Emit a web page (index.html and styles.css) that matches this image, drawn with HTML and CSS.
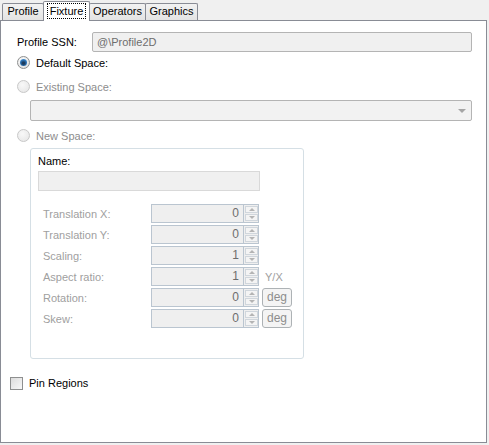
FILE: index.html
```html
<!DOCTYPE html>
<html lang="en">
<head>
    <meta charset="UTF-8">
    <title>Fixture</title>
    <link rel="stylesheet" href="styles.css">
</head>
<body>
    <div class="tabs">
        <div class="tab tab-profile">Profile</div>
        <div class="tab tab-fixture active"><span class="focus">Fixture</span></div>
        <div class="tab tab-operators">Operators</div>
        <div class="tab tab-graphics">Graphics</div>
    </div>

    <div class="panel">
        <div class="ssn-row">
            <span class="ssn-label">Profile SSN:</span>
            <div class="field">@\Profile2D</div>
        </div>

        <div class="option">
            <span class="radio checked"></span>
            <span>Default Space:</span>
        </div>
        <div class="option existing disabled">
            <span class="radio"></span>
            <span>Existing Space:</span>
        </div>
        <div class="combo"><span class="combo-arrow"></span></div>
        <div class="option new-space disabled">
            <span class="radio"></span>
            <span>New Space:</span>
        </div>

        <div class="group">
            <div class="name-label">Name:</div>
            <div class="name-field"></div>

            <div class="params">
                <div class="param">
                    <span class="param-label">Translation X:</span>
                    <div class="num">0</div>
                    <div class="spin"><span class="up"></span><span class="down"></span></div>
                </div>
                <div class="param">
                    <span class="param-label">Translation Y:</span>
                    <div class="num">0</div>
                    <div class="spin"><span class="up"></span><span class="down"></span></div>
                </div>
                <div class="param">
                    <span class="param-label">Scaling:</span>
                    <div class="num">1</div>
                    <div class="spin"><span class="up"></span><span class="down"></span></div>
                </div>
                <div class="param">
                    <span class="param-label">Aspect ratio:</span>
                    <div class="num">1</div>
                    <div class="spin"><span class="up"></span><span class="down"></span></div>
                    <span class="unit">Y/X</span>
                </div>
                <div class="param">
                    <span class="param-label">Rotation:</span>
                    <div class="num">0</div>
                    <div class="spin"><span class="up"></span><span class="down"></span></div>
                    <div class="unit-btn">deg</div>
                </div>
                <div class="param">
                    <span class="param-label">Skew:</span>
                    <div class="num">0</div>
                    <div class="spin"><span class="up"></span><span class="down"></span></div>
                    <div class="unit-btn">deg</div>
                </div>
            </div>
        </div>

        <div class="check-row">
            <span class="checkbox"></span>
            <span>Pin Regions</span>
        </div>
    </div>
</body>
</html>
```

FILE: styles.css
```css
* {
    box-sizing: border-box;
}
body {
    margin: 0;
    background: #f0f0f0;
    font-family: "Liberation Sans", Arial, sans-serif;
    font-size: 11px;
    color: #000;
    width: 489px;
    height: 445px;
    overflow: hidden;
}

/* tab strip */
.tabs {
    display: flex;
    align-items: flex-end;
    height: 20px;
    padding-left: 2px;
}
.tab {
    height: 17px;
    line-height: 15px;
    text-align: center;
    border: 1px solid #898c95;
    border-bottom: none;
    border-radius: 2px 2px 0 0;
    background: linear-gradient(#f2f2f2, #e3e3e3);
}
.tab-profile {
    width: 42px;
}
.tab-fixture {
    width: 47px;
    margin-left: -1px;
}
.tab-operators {
    width: 57px;
    margin-left: -1px;
}
.tab-graphics {
    width: 53px;
    margin-left: -1px;
}
.tab.active {
    position: relative;
    z-index: 1;
    height: 20px;
    margin-bottom: -1px;
    padding-top: 2px;
    background: #fff;
}
.focus {
    display: inline-block;
    height: 16px;
    line-height: 14px;
    padding: 0 2px;
    border: 1px dotted #000;
    margin-top: -1px;
}

/* page */
.panel {
    width: 487px;
    height: 423px;
    background: #fff;
    border: 1px solid #898c95;
    padding: 11px 14px 0 8px;
}
.ssn-row {
    display: flex;
    align-items: center;
    height: 20px;
    margin-left: 8px;
}
.ssn-label {
    width: 75px;
}
.field {
    flex: 1;
    height: 20px;
    line-height: 18px;
    padding-left: 4px;
    color: #6d6d6d;
    background: #f0f0f0;
    border: 1px solid #b4b4b4;
    border-radius: 2px;
}

.option {
    display: flex;
    align-items: center;
    gap: 6px;
    height: 17px;
    margin: 2px 0 0 8px;
}
.option.existing {
    margin-top: 7px;
}
.option.new-space {
    margin-top: 6px;
}
.option.disabled {
    color: #8d8d8d;
}
.radio {
    width: 13px;
    height: 13px;
    border-radius: 50%;
    border: 1px solid #8e8f8f;
    background: radial-gradient(circle at 40% 35%, #ffffff, #d8d8d8);
    display: flex;
    align-items: center;
    justify-content: center;
}
.disabled .radio {
    border-color: #c8c8c8;
    background: radial-gradient(circle at 40% 35%, #f8f8f8, #e4e4e4);
}
.radio.checked::after {
    content: "";
    width: 7px;
    height: 7px;
    border-radius: 50%;
    background: radial-gradient(circle at 50% 60%, #1e3b5c 20%, #2a73b8 55%, #6ab5ec);
}

.combo {
    position: relative;
    height: 21px;
    margin: 5px 0 0 21px;
    background: #f2f2f2;
    border: 1px solid #b4b4b4;
    border-radius: 2px;
}
.combo-arrow {
    position: absolute;
    right: 5px;
    top: 8px;
    border-left: 4px solid transparent;
    border-right: 4px solid transparent;
    border-top: 4px solid #a5a5a5;
}

/* new space group */
.group {
    width: 274px;
    height: 211px;
    margin: 4px 0 0 21px;
    border: 1px solid #d5dfe5;
    border-radius: 3px;
    padding: 6px 0 0 7px;
}
.name-label {
    line-height: 13px;
}
.name-field {
    width: 222px;
    height: 20px;
    margin-top: 3px;
    background: #f0f0f0;
    border: 1px solid #d9d9d9;
}
.params {
    display: flex;
    flex-direction: column;
    gap: 2px;
    margin-top: 13px;
    padding-left: 5px;
}
.param {
    display: flex;
    align-items: center;
    height: 19px;
}
.param-label {
    width: 108px;
    color: #a0a0a0;
}
.num {
    width: 93px;
    height: 19px;
    line-height: 17px;
    text-align: right;
    padding-right: 4px;
    font-size: 12px;
    color: #6d6d6d;
    background: #efefef;
    border: 1px solid #bac5d0;
}
.spin {
    width: 15px;
    height: 19px;
    display: flex;
    flex-direction: column;
    gap: 1px;
    padding: 1px 0 1px 1px;
    background: #efefef;
    border: 1px solid #bac5d0;
    border-left: none;
}
.spin span {
    flex: 1;
    display: flex;
    align-items: center;
    justify-content: center;
    background: #f4f4f4;
    border: 1px solid #d0d6dc;
}
.spin .up::after {
    content: "";
    border-left: 3px solid transparent;
    border-right: 3px solid transparent;
    border-bottom: 3px solid #b4b4b4;
}
.spin .down::after {
    content: "";
    border-left: 3px solid transparent;
    border-right: 3px solid transparent;
    border-top: 3px solid #b4b4b4;
}
.unit {
    margin-left: 6px;
    color: #a0a0a0;
}
.unit-btn {
    width: 30px;
    height: 19px;
    line-height: 17px;
    margin-left: 3px;
    text-align: center;
    color: #8d8d8d;
    font-size: 12px;
    background: #f4f4f4;
    border: 1px solid #adb2b5;
    border-radius: 3px;
}

.check-row {
    display: flex;
    align-items: center;
    gap: 6px;
    height: 14px;
    margin: 17px 0 0 1px;
}
.checkbox {
    width: 13px;
    height: 13px;
    border: 1px solid #8e8f8f;
    background: linear-gradient(135deg, #dcdcdc, #f8f8f8);
}
```
